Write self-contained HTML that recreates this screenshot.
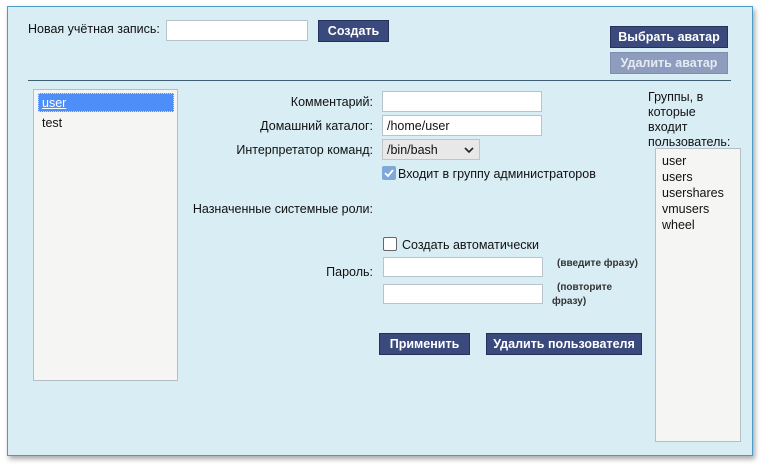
<!DOCTYPE html>
<html><head><meta charset="utf-8"><style>
*{box-sizing:border-box;margin:0;padding:0}
body{width:766px;height:470px;background:#fff;font-family:"Liberation Sans","DejaVu Sans",sans-serif;font-size:12.5px;color:#111;position:relative;overflow:hidden}
.a{position:absolute}
#panel{left:7px;top:6px;width:746px;height:450px;background:#d9edf4;border:1px solid #4a9bc8;box-shadow:2px 3px 5px rgba(0,0,0,.35)}
.in{position:absolute;background:#fff;border:1px solid #b9c3cb}
.btn{position:absolute;background:#3b4a7d;border:1px solid #25315a;color:#fff;font-weight:bold;font-size:12.5px;text-align:center;line-height:20px}
.lbl{position:absolute;text-align:right;white-space:nowrap}
.sm{position:absolute;font-size:10px;font-weight:bold;color:#333;white-space:nowrap}
</style></head><body>
<div class="a" id="panel"></div>
<div class="lbl" style="left:28px;top:22px">Новая учётная запись:</div>
<div class="in" style="left:166px;top:20px;width:142px;height:21px"></div>
<div class="btn" style="left:318px;top:20px;width:71px;height:22px">Создать</div>
<div class="btn" style="left:610px;top:26px;width:118px;height:22px">Выбрать аватар</div>
<div class="btn" style="left:610px;top:52px;width:118px;height:22px;background:#8e9cbe;border-color:#7e8db0;color:#e6ebf3">Удалить аватар</div>
<div class="a" style="left:28px;top:80px;width:703px;height:1px;background:#3f5e74"></div>
<div class="a" style="left:33px;top:89px;width:145px;height:292px;background:#f5f5f4;border:1px solid #b5bdc5"></div>
<div class="a" style="left:38px;top:93px;width:136px;height:19px;background:#4d8ef8;border:1px dotted #cde"></div>
<div class="a" style="left:42px;top:96px;color:#fff;text-decoration:underline">user</div>
<div class="a" style="left:42px;top:116px">test</div>
<div class="lbl" style="right:393px;top:95px">Комментарий:</div>
<div class="lbl" style="right:393px;top:119px">Домашний каталог:</div>
<div class="lbl" style="right:393px;top:143px">Интерпретатор команд:</div>
<div class="in" style="left:382px;top:91px;width:160px;height:21px"></div>
<div class="in" style="left:382px;top:115px;width:160px;height:21px;padding:3px 4px 0">/home/user</div>
<div class="a" style="left:382px;top:139px;width:98px;height:21px;background:#e8e8e8;border:1px solid #c4c4c4;padding:3px 4px 0">/bin/bash<svg class="a" style="left:81px;top:7px" width="10" height="7" viewBox="0 0 10 7"><path d="M1 1l4 4 4-4" fill="none" stroke="#222" stroke-width="1.6"/></svg></div>
<div class="a" style="left:382px;top:166px;width:14px;height:14px;background:#7fa8d8;border-radius:2px"><svg width="14" height="14" viewBox="0 0 14 14"><path d="M3 7l3 3 5-6" fill="none" stroke="#fff" stroke-width="1.8"/></svg></div>
<div class="a" style="left:398px;top:167px">Входит в группу администраторов</div>
<div class="lbl" style="right:393px;top:202px">Назначенные системные роли:</div>
<div class="a" style="left:383px;top:237px;width:14px;height:14px;background:#fff;border:1px solid #666;border-radius:2px"></div>
<div class="a" style="left:402px;top:238px">Создать автоматически</div>
<div class="lbl" style="right:393px;top:265px">Пароль:</div>
<div class="in" style="left:383px;top:257px;width:160px;height:20px"></div>
<div class="in" style="left:383px;top:284px;width:160px;height:20px"></div>
<div class="sm" style="left:557px;top:258px">(введите фразу)</div>
<div class="sm" style="left:557px;top:282px">(повторите</div>
<div class="sm" style="left:552px;top:296px">фразу)</div>
<div class="btn" style="left:379px;top:333px;width:91px;height:22px">Применить</div>
<div class="btn" style="left:486px;top:333px;width:156px;height:22px">Удалить пользователя</div>
<div class="a" style="left:648px;top:90px;line-height:15px">Группы, в<br>которые<br>входит<br>пользователь:</div>
<div class="a" style="left:655px;top:148px;width:86px;height:294px;background:#f5f5f4;border:1px solid #b5bdc5;padding:4px 6px;line-height:16px">user<br>users<br>usershares<br>vmusers<br>wheel</div>
</body></html>
